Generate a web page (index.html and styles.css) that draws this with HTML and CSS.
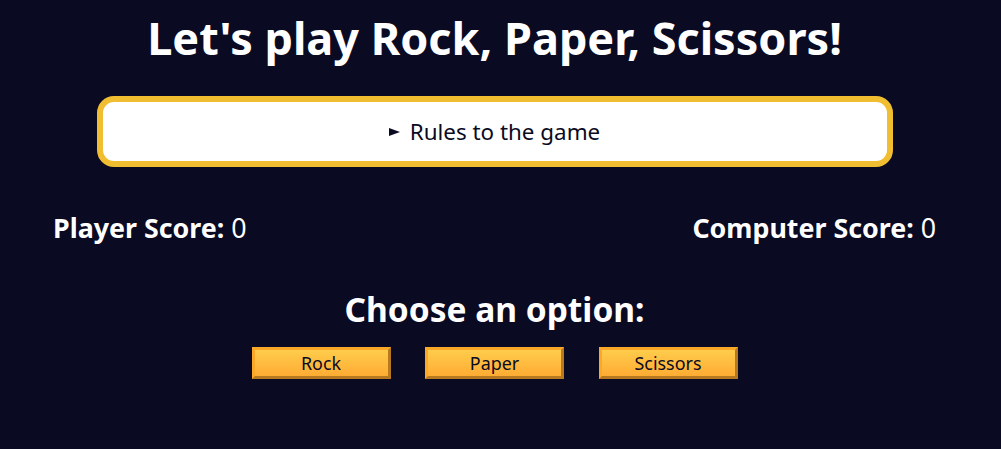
FILE: index.html
```html
<!DOCTYPE html>
<html lang="en">
<head>
<meta charset="utf-8">
<title>Rock, Paper, Scissors</title>
<link rel="stylesheet" href="styles.css">
</head>
<body>
<main class="page">
  <h1 class="title">Let's play Rock, Paper, Scissors!</h1>
  <details class="rules-container">
    <summary class="rules-summary">Rules to the game</summary>
  </details>
  <div class="score-container">
    <strong class="score">Player Score: <span class="score-num">0</span></strong>
    <strong class="score">Computer Score: <span class="score-num">0</span></strong>
  </div>
  <section class="options-container">
    <h2 class="options-title">Choose an option:</h2>
    <div class="options">
      <button class="btn" type="button">Rock</button>
      <button class="btn" type="button">Paper</button>
      <button class="btn" type="button">Scissors</button>
    </div>
  </section>
</main>
</body>
</html>
```
FILE: styles.css
```css
*, *::before, *::after { box-sizing: border-box; }

html, body {
  margin: 0;
  background-color: #0a0a23;
}

body {
  color: #ffffff;
  font-family: "Noto Sans", "Open Sans", sans-serif;
  text-align: center;
}

.page {
  width: 989px;
  padding-top: 10px;
}

.title {
  margin: 0;
  font-size: 45px;
  font-weight: 700;
  line-height: 56px;
}

.rules-container {
  width: 796px;
  height: 71px;
  margin: 30px auto 0;
  padding: 0;
  border: 6px solid #f1be32;
  border-radius: 17px;
  background-color: #ffffff;
  color: #0a0a23;
  display: flex;
  align-items: center;
  justify-content: center;
}

.rules-summary {
  display: flex;
  align-items: center;
  list-style: none;
  font-size: 22.4px;
  line-height: 30px;
  cursor: pointer;
}

.rules-summary::-webkit-details-marker { display: none; }

.rules-summary::before {
  content: "";
  width: 0;
  height: 0;
  margin-right: 10px;
  margin-top: 1px;
  border-left: 11px solid #0a0a23;
  border-top: 4.5px solid transparent;
  border-bottom: 4.5px solid transparent;
}

.score-container {
  display: flex;
  justify-content: space-between;
  padding: 0 53px;
  margin-top: 45px;
  font-size: 26.8px;
  line-height: 32px;
}

.score { font-weight: 700; }
.score-num { font-weight: 400; }

.options-container {
  margin-top: 45px;
}

.options-title {
  margin: 0;
  font-size: 33.5px;
  font-weight: 700;
  line-height: 40px;
}

.options {
  display: flex;
  justify-content: center;
  gap: 34.5px;
  margin-top: 18px;
}

.btn {
  width: 139px;
  height: 32px;
  padding: 0;
  font-family: "Noto Sans", "Open Sans", sans-serif;
  font-size: 17.9px;
  line-height: 24px;
  color: #0a0a23;
  background-color: #feac32;
  background-image: linear-gradient(#fecc4c, #ffac33);
  border-style: solid;
  border-width: 3px;
  border-top-color: #f9a827;
  border-left-color: #f9a827;
  border-right-color: #b7791f;
  border-bottom-color: #b7791f;
  cursor: pointer;
}
```
